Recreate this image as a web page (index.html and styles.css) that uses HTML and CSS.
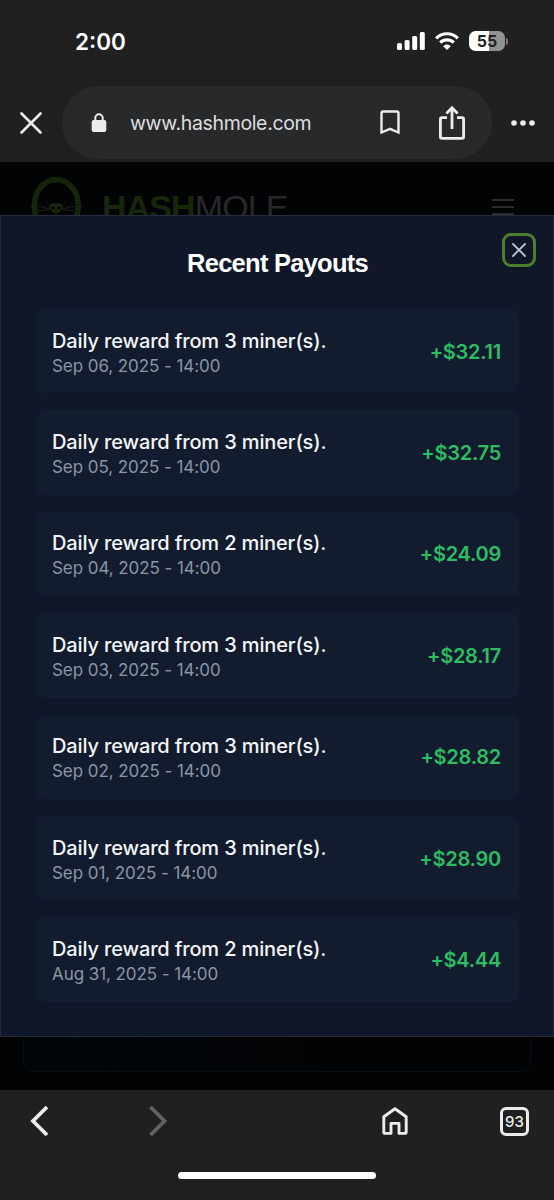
FILE: index.html
```html
<!DOCTYPE html>
<html lang="en">
<head>
<meta charset="utf-8">
<title>Recent Payouts</title>
<link rel="stylesheet" href="styles.css">
</head>
<body>
<div class="phone">
  <header class="chrome">
    <div class="status">
      <span class="time">2:00</span>
      <div class="indicators">
        <svg class="signal" width="28" height="18" viewBox="0 0 28 18" fill="#fff"><rect x="0" y="11" width="5" height="7" rx="1.5"/><rect x="7.6" y="8" width="5" height="10" rx="1.5"/><rect x="15.2" y="4" width="5" height="14" rx="1.5"/><rect x="22.8" y="0" width="5" height="18" rx="1.5"/></svg>
        <svg class="wifi" width="24" height="18" viewBox="0 0 24 18" fill="none" stroke="#fff" stroke-width="3.2"><path d="M1.2 6.3C7.2.2 16.8.2 22.8 6.3M5.2 10.6C9 6.9 15 6.9 18.8 10.6"/><path d="M12 18 8.2 14.2C10.2 12 13.8 12 15.8 14.2Z" fill="#fff" stroke="none"/></svg>
        <div class="battery"><span class="level">55</span><i class="cap"></i></div>
      </div>
    </div>
    <div class="toolbar">
      <svg class="stop" width="22" height="22" viewBox="0 0 22 22" fill="none" stroke="#ececed" stroke-width="2.6" stroke-linecap="round"><path d="M1.5 1.5 20.5 20.5M20.5 1.5 1.5 20.5"/></svg>
      <div class="address">
        <svg class="lock" width="16" height="20" viewBox="0 0 16 20"><path d="M4.3 8V5a3.7 3.7 0 0 1 7.4 0v3" fill="none" stroke="#ececed" stroke-width="2"/><rect x=".7" y="7" width="14.6" height="12" rx="2" fill="#ececed"/></svg>
        <span class="url">www.hashmole.com</span>
        <svg class="bookmark" width="20" height="25" viewBox="0 0 20 25" fill="none" stroke="#ececed" stroke-width="2.4"><path d="M1.5 3.2Q1.5 1.5 3.2 1.5H16.8Q18.5 1.5 18.5 3.2V22.5L10 18.8 1.5 22.5Z"/></svg>
        <svg class="share" width="26" height="34" viewBox="0 0 26 34" fill="none" stroke="#ececed" stroke-width="2.8"><path d="M8 11.6H3.2Q1.4 11.6 1.4 13.4V30.6Q1.4 32.4 3.2 32.4H22.8Q24.6 32.4 24.6 30.6V13.4Q24.6 11.6 22.8 11.6H18M13 23V2M7.4 7.4 13 1.8 18.6 7.4"/></svg>
      </div>
      <svg class="more" width="24" height="6" viewBox="0 0 24 6" fill="#ececed"><circle cx="3" cy="3" r="2.8"/><circle cx="12" cy="3" r="2.8"/><circle cx="21" cy="3" r="2.8"/></svg>
    </div>
  </header>

  <main class="page">
    <div class="site-header">
      <svg class="logo" width="54" height="40" viewBox="0 0 54 40" fill="none"><ellipse cx="27.3" cy="30" rx="22" ry="26.5" stroke="#16250a" stroke-width="5.500"/><path d="M1 31Q12 29 21 33M3 36Q14 33 21 34M53 31Q42 29 33 33M51 36Q40 33 33 34" stroke="#1a2211"/><path d="M20 30Q20 27 27 27T34 30Q34 33 30 36Q27 39 24 36Q20 33 20 30Z" fill="#18250d"/><circle cx="24" cy="32" r="1.5" fill="#020305"/><circle cx="30" cy="32" r="1.5" fill="#020305"/></svg>
      <div class="brand"><b>HASH</b><span>MOLE</span></div>
      <svg class="menu" width="22" height="17" viewBox="0 0 22 17" stroke="#2b2b2e" stroke-width="2"><path d="M0 2H22M0 9H22M0 16H22"/></svg>
    </div>
    <section class="modal">
      <h1>Recent Payouts</h1>
      <button class="close" aria-label="Close"><svg width="16" height="16" viewBox="0 0 16 16" fill="none" stroke="#bcc3ce" stroke-width="1.8" stroke-linecap="round"><path d="M2 2 14 14M14 2 2 14"/></svg></button>
      <ul class="payouts">
        <li><div><p class="name">Daily reward from 3 miner(s).</p><p class="date">Sep 06, 2025 - 14:00</p></div><strong>+$32.11</strong></li>
        <li><div><p class="name">Daily reward from 3 miner(s).</p><p class="date">Sep 05, 2025 - 14:00</p></div><strong>+$32.75</strong></li>
        <li><div><p class="name">Daily reward from 2 miner(s).</p><p class="date">Sep 04, 2025 - 14:00</p></div><strong>+$24.09</strong></li>
        <li><div><p class="name">Daily reward from 3 miner(s).</p><p class="date">Sep 03, 2025 - 14:00</p></div><strong>+$28.17</strong></li>
        <li><div><p class="name">Daily reward from 3 miner(s).</p><p class="date">Sep 02, 2025 - 14:00</p></div><strong>+$28.82</strong></li>
        <li><div><p class="name">Daily reward from 3 miner(s).</p><p class="date">Sep 01, 2025 - 14:00</p></div><strong>+$28.90</strong></li>
        <li><div><p class="name">Daily reward from 2 miner(s).</p><p class="date">Aug 31, 2025 - 14:00</p></div><strong>+$4.44</strong></li>
      </ul>
    </section>
    <div class="card-edge"></div>
  </main>

  <footer class="bottom">
    <nav>
      <svg class="back" width="20" height="32" viewBox="0 0 20 32" fill="none" stroke="#ececed" stroke-width="3.8"><path d="M17 2 3 16 17 30"/></svg>
      <svg class="forward" width="20" height="32" viewBox="0 0 20 32" fill="none" stroke="#626266" stroke-width="3.8"><path d="M1.5 2 15.500 16 1.5 30"/></svg>
      <svg class="home" width="26" height="28" viewBox="0 0 26 28" fill="none" stroke="#ececed" stroke-width="2.9" stroke-linejoin="round"><path d="M1.8 9.8 13 1.8 24.2 9.8V25Q24.2 26.4 22.8 26.4H17V16.4H9V26.4H3.2Q1.8 26.4 1.8 25Z"/></svg>
      <span class="tabs">93</span>
    </nav>
    <div class="home-indicator"></div>
  </footer>
</div>
</body>
</html>
```

FILE: styles.css
```css
* { box-sizing: border-box; margin: 0; padding: 0; }
body { background: #202020; font-family: Inter, "Liberation Sans", sans-serif; }
svg { display: block; flex: none; }
.phone { width: 554px; height: 1200px; display: flex; flex-direction: column; overflow: hidden; }

.chrome { height: 162px; background: #202020; flex: none; }
.status { height: 86px; padding: 0 46px 4px 75px; display: flex; align-items: center; justify-content: space-between; }
.time { margin-top: 1px; color: #fff; font-size: 22.5px; font-weight: 600; line-height: 28px; }
.indicators { display: flex; align-items: center; }
.wifi { margin: 0 10px 0 10px; }
.battery { display: flex; align-items: center; gap: 1px; }
.level { width: 36px; height: 20px; border-radius: 6.5px; background: linear-gradient(90deg, #fff 55%, #919191 55%); color: #202020; font-size: 16px; font-weight: 700; line-height: 21px; text-align: center; }
.cap { width: 2px; height: 7px; border-radius: 0 2px 2px 0; background: #777; }
.toolbar { height: 73px; padding: 0 19px 0 20px; display: flex; align-items: center; }
.address { width: 430px; height: 73px; margin-left: 20px; padding: 0 27px 0 29px; border-radius: 36.5px; background: #28292b; display: flex; align-items: center; }
.url { margin-left: 23px; color: #dededf; font-size: 19.5px; letter-spacing: -.34px; line-height: 28px; white-space: nowrap; }
.bookmark { margin-left: auto; }
.share { margin-left: 39px; }
.more { margin-left: 19px; }

.page { height: 928px; background: #020305; flex: none; }
.site-header { height: 53px; padding: 14px 40px 0 29px; display: flex; align-items: flex-start; overflow: hidden; }
.brand { display: flex; margin: 14px 0 0 19px; font-family: "Liberation Sans", sans-serif; font-size: 34px; line-height: 34px; }
.brand b { color: #16270a; letter-spacing: -.9px; }
.brand span { color: #28282b; letter-spacing: -.9px; }
.menu { margin: 22px 0 0 auto; }
.modal { position: relative; height: 822px; padding: 30px 34px 0 35px; border: 1px solid #242c3d; background: #101729; }
h1 { color: #fff; font-family: "Liberation Sans", sans-serif; font-size: 25.5px; font-weight: 700; letter-spacing: -.75px; line-height: 34px; text-align: center; }
.close { position: absolute; top: 17px; right: 17px; width: 34px; height: 34px; border: 3px solid #4c7f2b; border-radius: 9px; background: #101729; display: grid; place-items: center; }
.payouts { margin-top: 29px; display: grid; gap: 17px; list-style: none; }
.payouts li { height: 84.4px; padding: 2px 17px 0 15px; border: 1px solid #141d2e; border-radius: 9px; background: #131c2e; display: flex; align-items: center; justify-content: space-between; }
.name { padding-top: 1px; color: #f4f5f7; font-size: 20px; font-weight: 500; letter-spacing: -.14px; line-height: 26px; }
.date { color: #8b95a5; font-size: 17px; letter-spacing: -.07px; line-height: 24px; }
.payouts strong { color: #2dbd63; font-size: 20px; font-weight: 600; letter-spacing: -.26px; line-height: 25px; }
.card-edge { height: 35px; margin: 0 23px; border: 1px solid #050e10; border-top: 0; border-radius: 0 0 10px 10px; background: linear-gradient(90deg, #010709, #020305 60%); }

.bottom { height: 110px; background: #202020; display: flex; flex-direction: column; align-items: center; flex: none; }
.bottom nav { align-self: stretch; height: 62px; padding: 0 25px 0 30px; display: flex; align-items: center; }
.forward { margin-left: 99px; }
.home { margin-left: 213px; }
.tabs { width: 29px; height: 29px; margin-left: auto; border: 3px solid #ececed; border-radius: 6px; color: #ececed; font-size: 15px; font-weight: 500; line-height: 23px; text-align: center; }
.home-indicator { width: 198px; height: 7px; margin-top: 20px; border-radius: 4px; background: #fff; }
```
